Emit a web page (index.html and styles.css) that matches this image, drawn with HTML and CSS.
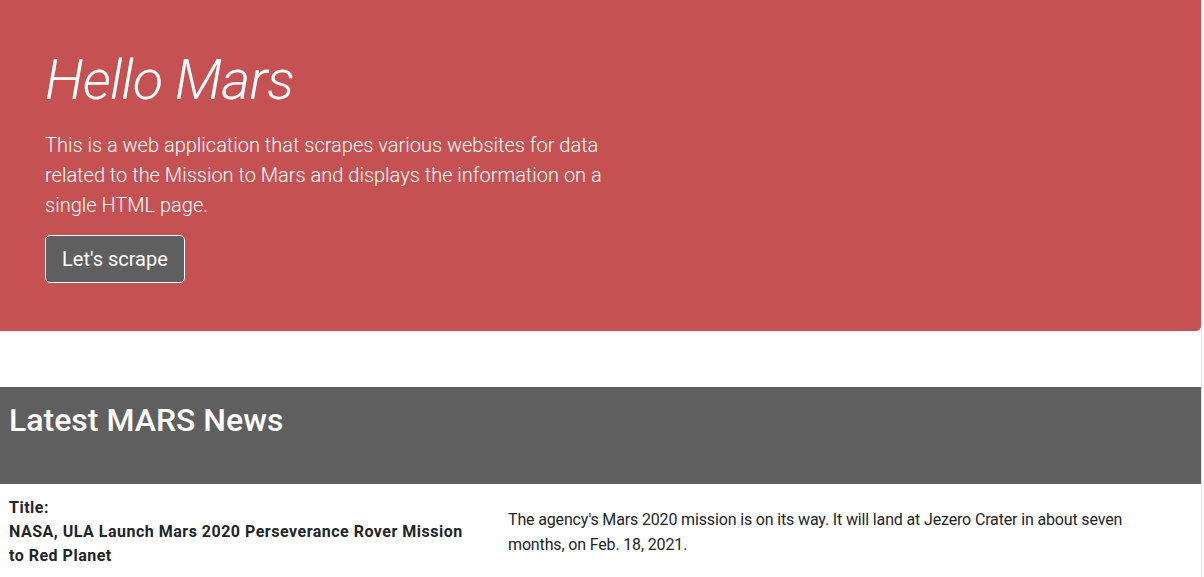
FILE: index.html
```html
<!DOCTYPE html>
<html lang="en">
<head>
<meta charset="utf-8">
<title>Mission to Mars</title>
<link rel="stylesheet" href="styles.css">
</head>
<body>
<div class="page">
  <header class="jumbotron">
    <h1 class="display">Hello Mars</h1>
    <p class="lead">This is a web application that scrapes various websites for data related to the Mission to Mars and displays the information on a single HTML page.</p>
    <a class="btn" href="#">Let's scrape</a>
  </header>

  <section class="news">
    <div class="news-head">
      <h2>Latest MARS News</h2>
    </div>
    <div class="news-row">
      <div class="news-title">
        <strong>Title:</strong><br>
        <strong>NASA, ULA Launch Mars 2020 Perseverance Rover Mission to Red Planet</strong>
      </div>
      <div class="news-body">
        <p>The agency's Mars 2020 mission is on its way. It will land at Jezero Crater in about seven months, on Feb. 18, 2021.</p>
      </div>
    </div>
  </section>
</div>
</body>
</html>
```

FILE: styles.css
```css
* { box-sizing: border-box; }
html, body { margin: 0; padding: 0; background: #fff; }
body {
  font-family: Roboto, "Noto Sans", "Liberation Sans", sans-serif;
  font-size: 16px;
  line-height: 1.5;
  color: #212529;
}
.page {
  width: 1202px;
  min-height: 577px;
  border-right: 1px solid #e2e2e2;
}
.jumbotron {
  background: #c65152;
  color: #fff;
  padding: 47px 45px 48px;
  border-radius: 0 0 5px 0;
  margin-bottom: 56px;
}
.display {
  margin: 0 0 16px;
  font-size: 56px;
  font-weight: 300;
  font-style: italic;
  line-height: 1.2;
  letter-spacing: -0.8px;
}
.lead {
  margin: 0 0 15px;
  font-size: 20px;
  font-weight: 300;
  line-height: 30px;
  max-width: 560px;
}
.btn {
  display: inline-block;
  padding: 8px 16px;
  font-size: 20px;
  line-height: 30px;
  color: #fff;
  background: #5f5f5f;
  border: 1px solid #fff;
  border-radius: 5px;
  text-decoration: none;
}
.news-head {
  background: #5f5f5f;
  color: #fff;
  height: 97px;
  padding: 14px 9px 0;
}
.news-head h2 {
  margin: 0;
  font-size: 32px;
  font-weight: 500;
  line-height: 38px;
}
.news-row {
  display: grid;
  grid-template-columns: 470px 1fr;
  column-gap: 29px;
  align-items: center;
  padding: 12px 9px 0;
}
.news-title { font-weight: 700; line-height: 24px; letter-spacing: 0.5px; }
.news-title strong { font-weight: 700; }
.news-body p { margin: 0; line-height: 25px; max-width: 640px; letter-spacing: -0.15px; }
```
